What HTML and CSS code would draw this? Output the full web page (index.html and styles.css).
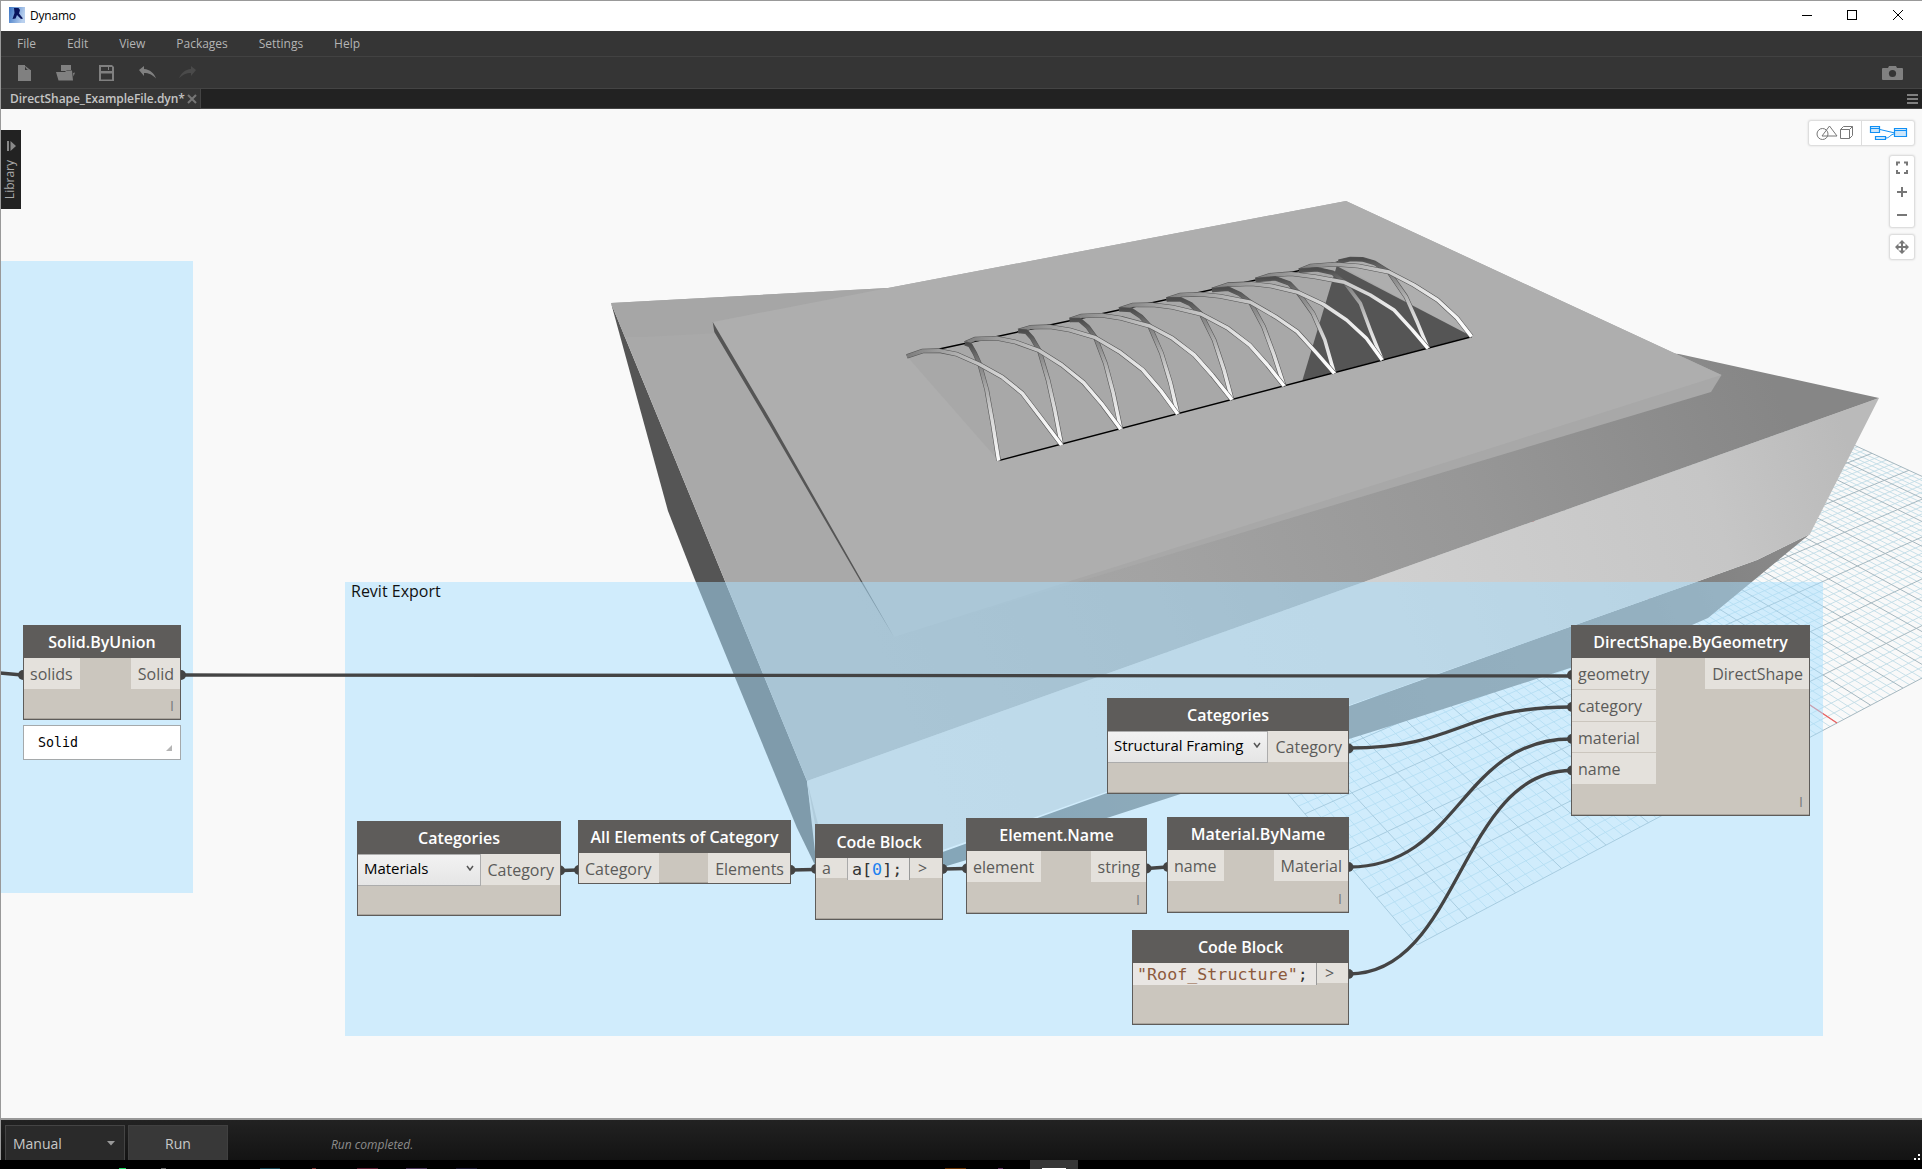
FILE: index.html
```html
<!DOCTYPE html>
<html lang="en">
<head>
<meta charset="utf-8">
<title>Dynamo</title>
<link rel="stylesheet" href="styles.css">
</head>
<body>
<div class="window">
  <header class="titlebar">
    <svg class="app-icon" width="16" height="16" viewBox="0 0 16 16"><defs><linearGradient id="app" x1="0" x2="1" y1="0" y2="0.3"><stop offset="0" stop-color="#3a74c4"/><stop offset="1" stop-color="#b9d0ee"/></linearGradient></defs><rect width="16" height="16" fill="url(#app)"/><path d="M5 1h4.500l1.500 2-1 3.500 4 5-2 .5-4-4-1.500 3.500-3 .5 2-6z" fill="#08145c"/></svg>
    <span class="app-name">Dynamo</span>
    <svg class="win-buttons" width="110" height="30" viewBox="1802 1 110 30" fill="none" stroke="#000"><path d="M1802 15.500h10"/><rect x="1847.500" y="10.500" width="9" height="9"/><path d="M1893 10l10 10m0-10l-10 10"/></svg>
  </header>
  <nav class="menu"><span>File</span><span>Edit</span><span>View</span><span>Packages</span><span>Settings</span><span>Help</span></nav>
  <div class="toolbar">
    <svg width="200" height="31" viewBox="0 57 200 31" fill="#808080">
      <path d="M18 65h7v5h6v11H18z"/><path d="M24 65l7 5.500-4-1z"/>
      <path d="M61 65h10v5h-4l-1 1h-5z"/><path d="M56 72h9l1.500-1.500H72l1 10H58.500zM73 73l2-.5-1.500 4z"/>
      <path fill-rule="evenodd" d="M99 65h13l2 2v14H99zM101 67v4h11v-4zM101 73.500v6h11v-6z"/><path d="M108 67h1v3h-1z"/>
      <path d="M139 70l5-4v3c6 .5 10 4 12 9.500-4-4-7-5.500-12-5.500v3z"/>
      <path d="M196 70l-5-4v3c-6 .5-10 4-12 9.500 4-4 7-5.500 12-5.500v3z" fill="#4a4a4a"/>
    </svg>
    <svg class="camera" width="21" height="14" viewBox="0 0 21 14"><path d="M1 2h5l1-2h7l1 2h5a1 1 0 0 1 1 1v10a1 1 0 0 1-1 1H1a1 1 0 0 1-1-1V3a1 1 0 0 1 1-1z" fill="#808080"/><circle cx="10.500" cy="7.500" r="3.600" fill="#353535"/></svg>
  </div>
  <div class="tabs">
    <div class="tab"><span class="tab-name">DirectShape_ExampleFile.dyn*</span><svg width="10" height="10" viewBox="0 0 10 10" stroke="#777" stroke-width="2"><path d="M1 1l8 8M9 1l-8 8"/></svg></div>
    <svg class="burger" width="11" height="10" viewBox="0 0 11 10" fill="#808080"><path d="M0 0h11v2H0zM0 4h11v2H0zM0 8h11v2H0z"/></svg>
  </div>

  <main class="canvas">
    <svg class="scene" width="1922" height="1009" viewBox="0 109 1922 1009">
      <defs>
        <linearGradient id="front" gradientUnits="userSpaceOnUse" x1="850" y1="800" x2="1860" y2="480"><stop offset="0" stop-color="#d7d7d7"/><stop offset=".55" stop-color="#d0d0d0"/><stop offset=".86" stop-color="#c6c6c6"/><stop offset="1" stop-color="#bababa"/></linearGradient>
        <linearGradient id="roof" gradientUnits="userSpaceOnUse" x1="1760" y1="350" x2="900" y2="700"><stop offset="0" stop-color="#868686"/><stop offset=".35" stop-color="#979797"/><stop offset=".7" stop-color="#a3a3a3"/><stop offset="1" stop-color="#a9a9a9"/></linearGradient>
        <linearGradient id="under" gradientUnits="userSpaceOnUse" x1="950" y1="860" x2="1780" y2="560"><stop offset="0" stop-color="#606a6e"/><stop offset=".3" stop-color="#757575"/><stop offset=".85" stop-color="#7f7f7f"/><stop offset="1" stop-color="#888"/></linearGradient>
        <linearGradient id="ribA" x1="0" y1="0" x2="1" y2="0"><stop offset="0" stop-color="#7c7c7c"/><stop offset=".35" stop-color="#b4b4b4"/><stop offset=".7" stop-color="#e0e0e0"/><stop offset="1" stop-color="#fff"/></linearGradient>
        <linearGradient id="ribB" x1="0" y1="0" x2="0" y2="1"><stop offset="0" stop-color="#4c4c4c"/><stop offset=".2" stop-color="#858585"/><stop offset=".6" stop-color="#d4d4d4"/><stop offset="1" stop-color="#fafafa"/></linearGradient>
      </defs>
      <g id="grid" fill="none"><path class="grid-minor"/><path class="grid-major"/><path class="grid-axis"/></g>
      <path d="M611 303L807 781L819 870L814 863L797 828L734 675L695 580L668 511Z" fill="#555"/>
      <path d="M820 896L1533 640L1696 582L1757 560L1810 534L1708 618L1692 625L1570 668L1400 723L1349 739L1110 817L940 868Z" fill="url(#under)"/>
      <path d="M807 781L1879 398L1810 534L1757 560L1696 582L1533 640L940 851L820 896Z" fill="url(#front)"/>
      <path d="M807 781L818 824L815 824Z" fill="#b8b8b8"/>
      <path d="M611 303L888 288L1679 354L1879 398L807 781Z" fill="url(#roof)"/>
      <path d="M611 303L888 288L720 333L644 337L625 337Z" fill="#a6a6a6"/>
      <path d="M713 322L888 288L1346 201L1721.500 375L1711 392L894 637L714 331Z" fill="#a8a8a8"/>
      <path d="M713 322L888 288L1346 201L1721.500 375L894 637Z" fill="#aeaeae"/>
      <path d="M712.700 322L714.300 332L769 424L859.800 580L894 637L861.300 580L770.500 420Z" fill="#555"/>
      <!-- roof opening; coordinates are local to the opening's own frame -->
      <g transform="translate(880 230) scale(.3954 .3333)" class="opening">
        <path d="M68 379L300 692L1496 320L1160 105Z" fill="#a8a8a8"/>
        <path d="M1155 108L1496 319L1068 452Z" fill="#555"/>
        <path d="M300 692L1496 320M150 357L480 272L1160 96" class="edge"/>
        <g id="ribs"></g>
      </g>
    </svg>

    <section class="group group-left"></section>
    <section class="group group-export"><h2>Revit Export</h2></section>

    <svg class="scene" width="1922" height="1009" viewBox="0 109 1922 1009" fill="none" stroke="#444" stroke-width="3.300">
      <path d="M0 673L22 675M181 675L1571 676M561 870.500L578 870M791 870L815 869.500M943 869L966 868.500M1147 868.500L1167 867M1349 748C1460 748 1460 707 1571 707M1349 867C1460 867 1460 739 1571 739M1349 974C1460 974 1460 770.500 1571 770.500"/>
      <g fill="#444" stroke="none"><circle cx="23" cy="675" r="5"/><circle cx="181" cy="675" r="5"/><circle cx="560" cy="870.500" r="5"/><circle cx="579" cy="870" r="5"/><circle cx="790.500" cy="870" r="5"/><circle cx="816" cy="869" r="5"/><circle cx="942.500" cy="869" r="5"/><circle cx="967" cy="868.500" r="5"/><circle cx="1146.500" cy="868.500" r="5"/><circle cx="1168" cy="867" r="5"/><circle cx="1348.500" cy="748.500" r="5"/><circle cx="1348.500" cy="867" r="5"/><circle cx="1348.500" cy="974" r="5"/><circle cx="1572" cy="675" r="5"/><circle cx="1572" cy="707" r="5"/><circle cx="1572" cy="739" r="5"/><circle cx="1572" cy="770.500" r="5"/></g>
    </svg>

    <article class="node n-union"><h3>Solid.ByUnion</h3><div class="ports"><span class="port">solids</span><span class="port">Solid</span></div><i class="lacing">I</i></article>
    <div class="preview"><span>Solid</span></div>

    <article class="node n-cat-a"><h3>Categories</h3><div class="ports"><div class="select w-a"><span>Materials</span><svg width="8" height="6" viewBox="0 0 8 6"><path d="M1 1l3 4 3-4" fill="none" stroke="#555" stroke-width="1.500"/></svg></div><span class="port">Category</span></div></article>
    <article class="node n-all"><h3>All Elements of Category</h3><div class="ports"><span class="port">Category</span><span class="port">Elements</span></div></article>
    <article class="node n-code-a"><h3>Code Block</h3><div class="ports code"><span class="port">a</span><code>a[<b>0</b>];</code><span class="port out">&gt;</span></div></article>
    <article class="node n-elem"><h3>Element.Name</h3><div class="ports"><span class="port">element</span><span class="port">string</span></div><i class="lacing">I</i></article>
    <article class="node n-cat-b"><h3>Categories</h3><div class="ports"><div class="select w-b"><span>Structural Framing</span><svg width="8" height="6" viewBox="0 0 8 6"><path d="M1 1l3 4 3-4" fill="none" stroke="#555" stroke-width="1.500"/></svg></div><span class="port">Category</span></div></article>
    <article class="node n-mat"><h3>Material.ByName</h3><div class="ports"><span class="port">name</span><span class="port">Material</span></div><i class="lacing">I</i></article>
    <article class="node n-code-b"><h3>Code Block</h3><div class="ports code"><code><em>"Roof_Structure"</em>;</code><span class="port out">&gt;</span></div></article>
    <article class="node n-shape"><h3>DirectShape.ByGeometry</h3><div class="ports"><div class="inputs"><span class="port">geometry</span><span class="port">category</span><span class="port">material</span><span class="port">name</span></div><span class="port">DirectShape</span></div><i class="lacing">I</i></article>

    <aside class="library"><svg width="9" height="10" viewBox="0 0 9 10" fill="#888"><path d="M0 0h2v10H0zM3.500 0L9 5l-5.500 5z"/></svg><span>Library</span></aside>

    <div class="view-switch">
      <svg width="52" height="24" viewBox="0 0 52 24" fill="none" stroke="#777"><circle cx="13.500" cy="13" r="5.500"/><path d="M13 15l7.500-10L28 15zM31.500 8.500h9v9h-9zM31.500 8.500l3-3h9l-3 3M43.500 5.500v9l-3 3"/></svg>
      <svg width="52" height="24" viewBox="0 0 52 24" fill="#cce6fb" stroke="#1090f5" stroke-width="1.200"><path d="M18 8.500l15 3.500M24 17c4 0 4-4 9-4" fill="none" stroke-width="1"/><path d="M8.500 5.500h9v6h-9zM8.500 7.500h9M32.500 7.500h12v8h-12zM32.500 9.500h12M13.500 15.500h10v3h-10z"/></svg>
    </div>
    <div class="zoom-panel">
      <svg width="24" height="71" viewBox="0 0 24 71" fill="none" stroke="#777" stroke-width="2"><path d="M7 9.500v-3h3M14 6.500h3v3M17 14v3h-3M10 17H7v-3M7 36h10M12 31v10M7 59h10"/></svg>
    </div>
    <div class="pan-panel"><svg width="24" height="24" viewBox="0 0 24 24"><path d="M7 12h10M12 7v10" stroke="#777" stroke-width="2"/><path d="M5 12l3.500-3.500v7zM19 12l-3.500-3.500v7zM12 5L8.500 8.500h7zM12 19l-3.500-3.500h7z" fill="#777"/></svg></div>
  </main>

  <footer class="runbar">
    <div class="combo"><span>Manual</span><svg width="8" height="5" viewBox="0 0 8 5"><path d="M0 0h8L4 4.500z" fill="#999"/></svg></div>
    <div class="run">Run</div>
    <span class="status">Run completed.</span>
    <svg class="grip" width="6" height="6" viewBox="0 0 6 6" fill="#fff"><path d="M4 0h2v2H4zM0 4h2v2H0zM4 4h2v2H4z"/></svg>
  </footer>
  <div class="taskbar"><svg width="1922" height="9" viewBox="0 0 1922 9"><path d="M1030 0h48v9h-48z" fill="#363636"/><path d="M1042 8h24v1h-24z" fill="#fff"/><path d="M119 8h7v1h-7z" fill="#1ed760"/><path d="M161 8h5v1h-5z" fill="#666"/><path d="M260 8h20v1h-20z" fill="#12404e"/><path d="M312 8h4v1h-4z" fill="#733"/><path d="M357 8h21v1h-21z" fill="#581c30"/><path d="M406 8h21v1h-21z" fill="#4a3558"/><path d="M456 8h21v1h-21z" fill="#1c1830"/><path d="M945 8h21v1h-21z" fill="#663000"/><path d="M998 8h5v1h-5z" fill="#603060"/></svg></div>
</div>
<script src="scene.js"></script>
</body>
</html>
```
FILE: styles.css
```css
* { box-sizing: border-box; }
body { margin: 0; background: #000; font-family: "Open Sans", "Noto Sans", sans-serif; font-size: 12px; overflow: hidden; }
.window { width: 1922px; height: 1169px; display: flex; flex-direction: column; position: relative; }
.window::after { content: ""; position: absolute; left: 0; top: 0; width: 1922px; height: 1080px; border: 1px solid #999; border-bottom: 0; pointer-events: none; }
.window::before { content: ""; position: absolute; z-index: 1; left: 0; top: 1080px; width: 1px; height: 80px; background: #999; }
.titlebar { height: 31px; background: #fff; display: flex; align-items: center; padding: 1px 10px 0 9px; color: #000; }
.app-name { margin: -2px 0 0 5px; letter-spacing: -.2px; flex: 1; }
.app-icon { margin-top: -2px; }
.menu { height: 26px; background: #353535; border-bottom: 1px solid #424242; display: flex; align-items: center; padding-left: 17px; gap: 31px; letter-spacing: -.02px; color: #b4b4b4; }
.toolbar { height: 31px; background: #353535; display: flex; align-items: center; justify-content: space-between; padding-right: 19px; }
.tabs { height: 21px; background: #222; border-top: 1px solid #444; border-bottom: 1px solid #444; display: flex; align-items: center; justify-content: space-between; padding-right: 4px; }
.tab { width: 201px; height: 20px; background: #353535; border-right: 1px solid #444; display: flex; align-items: center; justify-content: space-between; padding: 0 3px 0 10px; color: #c4c4c4; font-weight: 600; }
.tab-name { white-space: nowrap; letter-spacing: -.06px; }
.canvas { height: 1009px; position: relative; overflow: hidden; background: #f9f9f9; }
.scene { position: absolute; left: 0; top: 0; }

.grid-minor { stroke: #c2dde7; stroke-width: .9; }
.grid-major { stroke: #a6b8c0; stroke-width: 1; }
.grid-axis { stroke: #f06060; stroke-width: 1.200; }
.opening path { vector-effect: non-scaling-stroke; }
.opening .edge { stroke: #000; stroke-width: 1.500; fill: none; }
.rib-shade { stroke: #555; stroke-width: 4.600; fill: none; stroke-linejoin: round; }
.rib { stroke-width: 3.500; fill: none; stroke-linejoin: round; }

.group { position: absolute; background: rgba(168, 224, 255, .51); }
.group-left { left: 0; top: 152px; width: 193px; height: 632px; }
.group-export { left: 345px; top: 473px; width: 1478px; height: 454px; }
.group h2 { margin: -2px 0 0 6px; font-size: 16px; font-weight: 400; line-height: 22px; color: #111; }

.node { position: absolute; height: 96px; background: #cbc6be; border: 1px solid #5e5c5a; box-shadow: inset 0 -1px #aaa59d; }
.node h3 { margin: 0; height: 32px; background: #5e5c5a; color: #fff; font-size: 16px; font-weight: 600; line-height: 32px; text-align: center; white-space: nowrap; }
.ports { display: flex; justify-content: space-between; align-items: flex-start; }
.port { display: block; height: 31px; padding: 0 7px 0 6px; background: #e4e1dc; color: #5b5b59; font-size: 16px; line-height: 32px; white-space: nowrap; }
.port:last-child { padding: 0 6px 0 7px; }
.inputs { display: flex; flex-direction: column; gap: 1px; width: 84px; }
.inputs .port { height: 30.750px; padding: 0 8px 0 6px; }
.lacing { position: absolute; right: 6px; bottom: 3px; font-style: normal; font-size: 14px; line-height: 20px; color: #77797c; }
.select { height: 32px; border: 1px solid #acacac; border-left: 0; background: linear-gradient(#f2f2f2, #e5e5e5); display: flex; justify-content: space-between; align-items: center; padding: 0 6px 4px; color: #000; font-size: 15px; letter-spacing: -.04px; }
.w-a { width: 123px; padding-bottom: 5px; }
.w-b { width: 160px; }
.select + .port:last-child { flex: 1; text-align: right; padding: 0 6px 0 0; }
.code .port { height: 20px; line-height: 21px; }
.code code { flex: 1; height: 22px; padding-left: 4px; background: #e9e6e3; border-right: 1px solid #999; font: 16.700px/23px "DejaVu Sans Mono", monospace; color: #333; white-space: nowrap; }
.code em { font-style: normal; color: #8c5a3c; }
.code b { font-weight: 400; color: #2080f0; }
.code .out { width: 32px; padding: 0 0 0 8px; }

.n-union { left: 23px; top: 516px; width: 158px; height: 95px; }
.n-cat-a { left: 357px; top: 712px; width: 204px; height: 95px; }
.n-all { left: 578px; top: 711px; width: 213px; height: 64px; }
.n-all .port { height: 30px; }
.n-code-a { left: 815px; top: 715px; width: 128px; }
.n-code-a h3 { height: 33px; line-height: 34px; }
.n-code-a .port:first-child { width: 31px; }
.n-code-a code { border-left: 1px solid #aaa; }
.n-elem { left: 966px; top: 709px; width: 181px; }
.n-cat-b { left: 1107px; top: 589px; width: 242px; }
.n-mat { left: 1167px; top: 708px; width: 182px; }
.n-code-b { left: 1132px; top: 821px; width: 217px; height: 95px; }
.n-code-b .out { width: 31px; }
.n-shape { left: 1571px; top: 516px; width: 239px; height: 191px; }
.preview { position: absolute; left: 23px; top: 616px; width: 158px; height: 35px; border: 1px solid #a5a9ab; background: #fff; padding-left: 14px; font: 13.300px/34px "DejaVu Sans Mono", monospace; color: #000; }
.preview::after { content: ""; position: absolute; right: 8px; bottom: 8px; border-left: 6px solid transparent; border-bottom: 6px solid #b5b5b5; }

.library { position: absolute; left: 1px; top: 21px; width: 20px; height: 79px; background: #222; color: #a8a8a8; display: flex; flex-direction: column; align-items: center; padding-top: 11px; gap: 9px; }
.library span { writing-mode: vertical-rl; transform: rotate(180deg); line-height: 18px; margin-right: 3px; }
.view-switch, .zoom-panel, .pan-panel { position: absolute; background: #fff; border-radius: 2px; box-shadow: 0 0 2px 1px #d4d4d4; display: flex; }
.view-switch { left: 1809px; top: 12px; width: 105px; height: 24px; }
.view-switch svg + svg { border-left: 1px solid #ddd; width: 53px; }
.zoom-panel { left: 1890px; top: 47px; width: 24px; height: 71px; }
.pan-panel { left: 1890px; top: 126px; width: 24px; height: 24px; }

.runbar { height: 42px; border-top: 2px solid #999; background: linear-gradient(#222, #131313); display: flex; align-items: flex-end; padding-left: 5px; position: relative; color: #c8c8c8; font-size: 14px; }
.combo { width: 120px; height: 35px; border: 1px solid #444; border-bottom: 0; background: #2a2a2a; display: flex; align-items: center; justify-content: space-between; padding: 1px 9px 0 7px; }
.run { margin-left: 3px; width: 100px; height: 35px; background: #383838; border: 1px solid #404040; border-bottom: 0; text-align: center; line-height: 36px; }
.status { margin-left: 103px; font-size: 12px; font-style: italic; color: #8c8c8c; line-height: 31px; }
.grip { position: absolute; right: 2px; bottom: 0; }
.taskbar { height: 9px; background: #000; display: flex; }
```
FILE: scene.js
```js
// Ground grid: 20 x 20 major cells, five minor cells per major, in perspective.
const project = (u, v) => {
  const w = 1 + 0.0227 * u + 0.0426 * v;
  return ((1417 + 83.7 * u + 18.23 * v) / w).toFixed(1) + " " + ((945 - 5.79 * u - 9.03 * v) / w).toFixed(1);
};
const line = (a, b, c, d) => "M" + project(a, b) + "L" + project(c, d);
let minor = "", major = "";
for (let i = 0; i <= 100; i++) {
  const k = i / 5;
  const pair = line(k, 0, k, 20) + line(0, k, 20, k);
  if (i % 5) minor += pair; else major += pair;
}
document.querySelector(".grid-minor").setAttribute("d", minor);
document.querySelector(".grid-major").setAttribute("d", major);
document.querySelector(".grid-axis").setAttribute("d", line(10, 0, 10, 10));

// Crossing ribs of the skylight.
const falling = [
  "1160,95 1190,87 1220,88 1250,98 1287,126 1330,200 1360,280 1386,355",
  "1060,122 1105,118 1145,128 1175,157 1215,220 1240,300 1270,390",
  "950,150 1000,145 1035,160 1057,187 1095,250 1125,330 1149,430",
  "840,180 880,176 910,192 937,217 970,290 995,370 1022,468",
  "725,208 760,208 785,222 812,252 845,330 870,420 890,509",
  "605,238 635,240 660,260 682,288 712,370 735,460 753,552",
  "480,270 505,270 525,290 545,323 570,400 590,490 609,598",
  "350,303 370,305 385,325 403,362 425,450 442,540 459,645",
  "215,340 228,345 240,370 252,402 270,480 285,580 300,692"
];
const sweeping = [
  "1060,122 1090,108 1150,103 1210,108 1287,126 1350,165 1410,210 1460,265 1496,320",
  "950,150 985,136 1040,131 1100,140 1175,157 1240,195 1300,240 1345,298 1386,355",
  "840,180 880,164 940,161 990,168 1057,187 1120,222 1180,270 1230,325 1270,390",
  "725,208 760,195 810,193 860,199 937,217 1000,260 1055,305 1105,370 1149,430",
  "605,238 640,225 690,224 740,232 812,252 880,295 935,345 980,405 1022,468",
  "480,270 510,258 560,256 610,265 682,288 740,325 795,375 840,435 890,509",
  "350,303 380,292 430,290 480,300 545,323 605,365 665,420 710,482 753,552",
  "215,340 240,327 295,325 340,335 403,362 460,405 515,458 560,520 609,598",
  "68,379 108,363 150,362 195,373 250,402 310,442 360,490 410,568 459,645"
];
const rib = (pts, paint) => `<path class="rib-shade" d="M${pts}"/><path class="rib" stroke="url(#${paint})" d="M${pts}"/>`;
document.getElementById("ribs").innerHTML = falling.map((p, i) => rib(p, "ribB") + rib(sweeping[i], "ribA")).join("");
```
